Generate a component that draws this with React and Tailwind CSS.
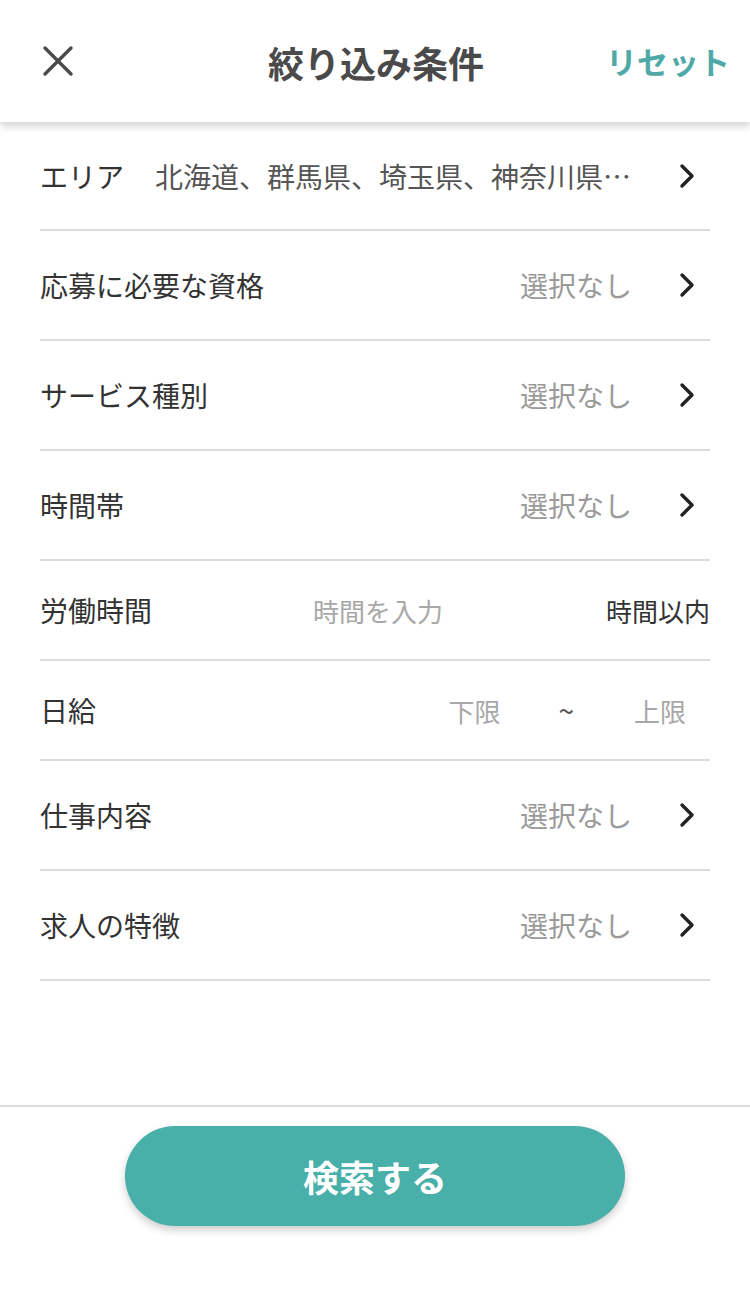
import React from 'react';

const font = { fontFamily: '"Noto Sans CJK JP", "Noto Sans", sans-serif' };

const Chevron = () => (
  <svg width="18" height="26" viewBox="0 0 18 26" className="shrink-0">
    <path d="M4 3 L14 13 L4 23" fill="none" stroke="#222" strokeWidth="3.4" strokeLinecap="round" strokeLinejoin="round" />
  </svg>
);

const SelectRow = ({ label, value }) => (
  <div className="h-[110px] flex items-center border-b-2 border-[#dcdcdc]">
    <span className="text-[28px] text-[#333]">{label}</span>
    <span className="ml-auto text-[28px] text-[#9a9a9a]">{value}</span>
    <span className="ml-[46px] mr-[14px] flex items-center"><Chevron /></span>
  </div>
);

export default function App() {
  const rows = [
    { label: '応募に必要な資格', value: '選択なし' },
    { label: 'サービス種別', value: '選択なし' },
    { label: '時間帯', value: '選択なし' },
  ];
  const rows2 = [
    { label: '仕事内容', value: '選択なし' },
    { label: '求人の特徴', value: '選択なし' },
  ];

  return (
    <div className="w-[750px] h-[1304px] bg-white flex flex-col overflow-hidden" style={font}>
      {/* ヘッダー */}
      <div className="relative z-10 h-[122px] shrink-0 flex items-center px-[40px] bg-white shadow-[0_4px_8px_rgba(0,0,0,0.18)]">
        <svg width="32" height="32" viewBox="0 0 32 32" className="ml-[2px]">
          <path d="M3 3 L29 29 M29 3 L3 29" stroke="#4a4a4a" strokeWidth="3.4" strokeLinecap="round" />
        </svg>
        <div className="flex-1 text-center text-[36px] font-bold text-[#4a4a4a] pl-[72px] pt-[2px]">絞り込み条件</div>
        <div className="text-[31px] font-bold text-[#4fa9a6] mr-[-20px]">リセット</div>
      </div>

      {/* 条件リスト */}
      <div className="flex-1 px-[40px]">
        <div className="h-[109px] flex items-center border-b-2 border-[#dcdcdc]">
          <span className="text-[28px] text-[#333]">エリア</span>
          <span className="ml-[31px] text-[28px] text-[#555] whitespace-nowrap">北海道、群馬県、埼玉県、神奈川県…</span>
          <span className="ml-auto mr-[14px] flex items-center"><Chevron /></span>
        </div>
        {rows.map((r, i) => (
          <SelectRow key={i} label={r.label} value={r.value} />
        ))}
        <div className="h-[100px] flex items-center border-b-2 border-[#dcdcdc]">
          <span className="text-[28px] text-[#333] w-[273px]">労働時間</span>
          <span className="text-[26px] text-[#a8a8a8]">時間を入力</span>
          <span className="ml-auto text-[26px] text-[#333]">時間以内</span>
        </div>
        <div className="h-[100px] flex items-center border-b-2 border-[#dcdcdc]">
          <span className="text-[28px] text-[#333]">日給</span>
          <span className="ml-auto text-[26px] text-[#a8a8a8]">下限</span>
          <span className="ml-[58px] text-[28px] text-[#555]">~</span>
          <span className="ml-[60px] mr-[24px] text-[26px] text-[#a8a8a8]">上限</span>
        </div>
        {rows2.map((r, i) => (
          <SelectRow key={i} label={r.label} value={r.value} />
        ))}
      </div>

      {/* フッター */}
      <div className="shrink-0 h-[199px] border-t-2 border-[#dcdcdc] flex justify-center pt-[19px]">
        <button className="w-[500px] h-[100px] rounded-full bg-[#48afa9] text-white text-[36px] font-bold shadow-[0_4px_8px_rgba(0,0,0,0.2)]">
          検索する
        </button>
      </div>
    </div>
  );
}
